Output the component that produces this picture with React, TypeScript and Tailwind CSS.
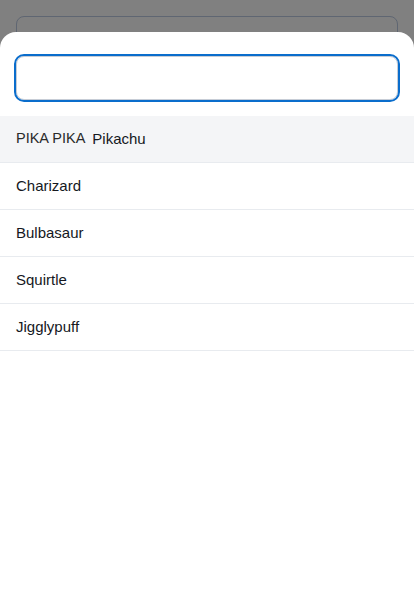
import React from "react";

const items = ["Charizard", "Bulbasaur", "Squirtle", "Jigglypuff"];

export default function App() {
  return (
    <div
      className="relative h-[600px] w-full overflow-hidden bg-[#808080]"
      style={{ fontFamily: '"Liberation Sans", Arial, sans-serif' }}
    >
      <div className="p-4">
        <div className="h-12 rounded-lg border border-[#5f6672]" />
      </div>
      <div className="absolute inset-x-0 bottom-0 top-8 rounded-t-2xl bg-white">
        <div className="px-4 pt-6 pb-4">
          <input
            className="block h-11 w-full rounded-lg border border-[#c7cdd6] bg-white px-3 text-[15px] outline-2 outline-[#0a6dcc]"
            aria-label="search"
          />
        </div>
        <ul>
          <li className="flex h-[47px] items-center border-b border-[#e8ebef] bg-[#f4f5f7] px-4">
            <span className="mr-[7px] text-[14.5px] text-[#2a2a2a]">PIKA PIKA</span>
            <span className="text-[15px] text-[#15181e]">Pikachu</span>
          </li>
          {items.map((n) => (
            <li
              key={n}
              className="flex h-[47px] items-center border-b border-[#e8ebef] px-4 text-[15px] text-[#15181e]"
            >
              {n}
            </li>
          ))}
        </ul>
      </div>
    </div>
  );
}
